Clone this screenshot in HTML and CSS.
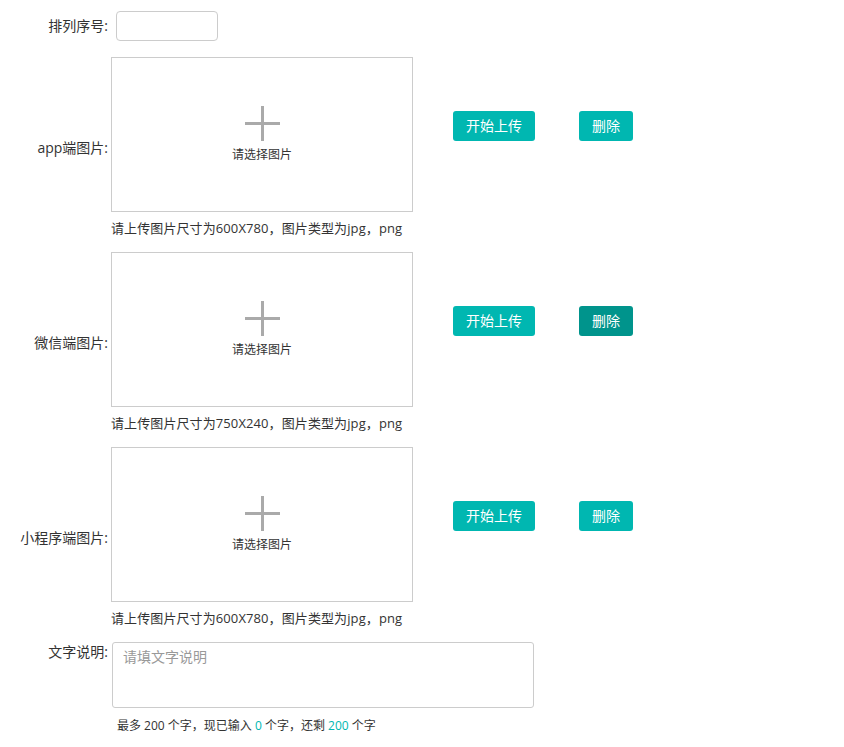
FILE: index.html
```html
<!DOCTYPE html>
<html lang="zh-CN">
<head>
<meta charset="utf-8">
<title>上传图片</title>
<link rel="stylesheet" href="styles.css">
</head>
<body>
<form class="form">
  <div class="row row-sort">
    <label class="label">排列序号:</label>
    <input class="input" type="text">
  </div>

  <div class="row row-upload">
    <label class="label">app端图片:</label>
    <div class="upload-col">
      <div class="upload-box">
        <span class="plus"></span>
        <span class="pick">请选择图片</span>
      </div>
      <div class="hint">请上传图片尺寸为600X780，图片类型为jpg，png</div>
    </div>
    <div class="actions">
      <button type="button" class="btn btn-upload">开始上传</button>
      <button type="button" class="btn btn-del">删除</button>
    </div>
  </div>

  <div class="row row-upload">
    <label class="label">微信端图片:</label>
    <div class="upload-col">
      <div class="upload-box">
        <span class="plus"></span>
        <span class="pick">请选择图片</span>
      </div>
      <div class="hint">请上传图片尺寸为750X240，图片类型为jpg，png</div>
    </div>
    <div class="actions">
      <button type="button" class="btn btn-upload">开始上传</button>
      <button type="button" class="btn btn-del btn-active">删除</button>
    </div>
  </div>

  <div class="row row-upload">
    <label class="label">小程序端图片:</label>
    <div class="upload-col">
      <div class="upload-box">
        <span class="plus"></span>
        <span class="pick">请选择图片</span>
      </div>
      <div class="hint">请上传图片尺寸为600X780，图片类型为jpg，png</div>
    </div>
    <div class="actions">
      <button type="button" class="btn btn-upload">开始上传</button>
      <button type="button" class="btn btn-del">删除</button>
    </div>
  </div>

  <div class="row row-text">
    <label class="label">文字说明:</label>
    <div class="text-col">
      <textarea class="textarea" placeholder="请填文字说明"></textarea>
      <div class="count">最多 200 个字，现已输入 <span class="num">0</span> 个字，还剩 <span class="num">200</span> 个字</div>
    </div>
  </div>
</form>
</body>
</html>
```

FILE: styles.css
```css
* { box-sizing: border-box; }

body {
  margin: 0;
  background: #fff;
  color: #333;
  font-family: "Open Sans", "Noto Sans CJK SC", sans-serif;
  font-size: 13px;
  line-height: 20px;
}

.form {
  padding-top: 11px;
}

.row {
  display: flex;
}

.label {
  width: 108px;
  flex: none;
  text-align: right;
  white-space: nowrap;
  color: #333;
  font-size: 14px;
}

.row-sort {
  align-items: center;
  margin-bottom: 16px;
}

.input {
  margin-left: 8px;
  width: 102px;
  height: 30px;
  border: 1px solid #ccc;
  border-radius: 4px;
  outline: none;
  padding: 0 8px;
  font: inherit;
}

.row-upload {
  align-items: center;
  margin-bottom: 14px;
}

.upload-col {
  margin-left: 3px;
  width: 302px;
  flex: none;
}

.upload-box {
  height: 155px;
  border: 1px solid #ccc;
  display: flex;
  flex-direction: column;
  align-items: center;
  padding-top: 48px;
}

.plus {
  position: relative;
  width: 35px;
  height: 35px;
}

.plus::before,
.plus::after {
  content: "";
  position: absolute;
  background: #aaa;
}

.plus::before {
  left: 0;
  right: 0;
  top: 16px;
  height: 3px;
}

.plus::after {
  top: 0;
  bottom: 0;
  left: 16px;
  width: 3px;
}

.pick {
  margin-top: 6px;
  font-size: 12px;
  line-height: 16px;
  color: #333;
}

.hint {
  margin-top: 6px;
  white-space: nowrap;
  letter-spacing: 0.1px;
}

.actions {
  align-self: flex-start;
  margin-top: 54px;
  margin-left: 40px;
  display: flex;
  gap: 44px;
}

.btn {
  height: 30px;
  border: none;
  border-radius: 3px;
  background: #00b7b1;
  color: #fff;
  font-family: "Open Sans", "Noto Sans CJK SC", sans-serif;
  font-size: 14px;
  line-height: 30px;
  padding: 0;
  cursor: pointer;
}

.btn-upload { width: 82px; }
.btn-del { width: 54px; }
.btn-active { background: #00948c; }

.row-text {
  align-items: flex-start;
}

.text-col {
  margin-left: 4px;
}

.textarea {
  display: block;
  width: 422px;
  height: 66px;
  border: 1px solid #ccc;
  border-radius: 3px;
  padding: 4px 10px;
  resize: none;
  outline: none;
  font: inherit;
  font-size: 14px;
  line-height: 20px;
  color: #333;
}

.textarea::placeholder {
  color: #999;
}

.count {
  margin-top: 8px;
  margin-left: 5px;
  font-size: 12px;
  line-height: 20px;
}

.num {
  color: #00b7b1;
}
```
